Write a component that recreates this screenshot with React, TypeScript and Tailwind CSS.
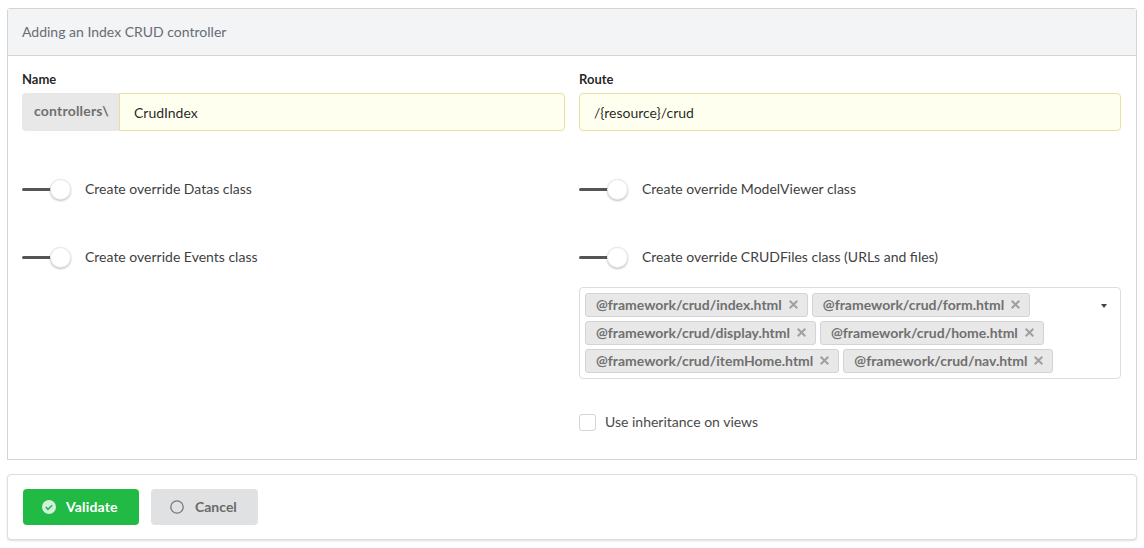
import React from "react";

const Toggle = ({ label }: { label: string }) => (
  <div className="flex items-center h-[22px]">
    <div className="relative w-[50px] h-[22px] shrink-0">
      <div className="absolute left-0 top-[10px] w-[30px] h-[3px] rounded-[2px] bg-[#555555]" />
      <div className="absolute left-[28px] top-[1px] w-[21px] h-[21px] rounded-full bg-white shadow-[0_1px_2px_0_rgba(34,36,38,0.3),0_0_0_1px_rgba(34,36,38,0.1)_inset]" />
    </div>
    <span className="ml-[13px] text-[14px] leading-[20px] text-[#3f3f3f]">{label}</span>
  </div>
);

const Chip = ({ label }: { label: string }) => (
  <span className="inline-flex items-center h-[24px] pb-[1px] pl-[10px] pr-[8px] rounded-[3px] bg-[#e8e8e8] border border-[#d4d4d5] text-[14px] font-bold text-[#707070]">
    {label}
    <svg className="ml-[6px]" width="11" height="11" viewBox="0 0 11 11">
      <path d="M1.7 1.7L9.3 9.3M9.3 1.7L1.7 9.3" stroke="#a0a0a0" strokeWidth="2" />
    </svg>
  </span>
);

export default function App() {
  return (
    <div className="w-[1144px] h-[548px] bg-white pt-[8px] px-[7px] font-['Lato','Liberation_Sans',sans-serif] overflow-hidden">
      <div className="h-[452px] border border-[#d4d4d5] rounded-t-[3px]">
        <div className="h-[47px] flex items-center pb-[1px] px-[14px] bg-[#f3f4f5] border-b border-[#d4d4d5] text-[14px] text-[#666d75]">
          Adding an Index CRUD controller
        </div>
        <div className="grid grid-cols-[543px_542px] gap-x-[14px] pl-[14px] pt-[14px]">
          <div>
            <div className="text-[13px] font-bold leading-[18px] text-[rgba(0,0,0,0.87)]">Name</div>
            <div className="flex h-[38px] mt-[5px]">
              <div className="w-[97px] pl-[12px] pt-[8px] bg-[#e8e8e8] rounded-l-[4px] text-[14px] tracking-[0.2px] leading-[20px] font-bold text-[#6f6f6f]">
                controllers\
              </div>
              <div className="flex-1 flex items-center pl-[14px] bg-[#fffff0] border border-[#e8e0a0] rounded-r-[4px] text-[14px] text-[rgba(0,0,0,0.87)]">
                CrudIndex
              </div>
            </div>
            <div className="mt-[47px]">
              <Toggle label="Create override Datas class" />
            </div>
            <div className="mt-[46px]">
              <Toggle label="Create override Events class" />
            </div>
          </div>
          <div>
            <div className="text-[13px] font-bold leading-[18px] text-[rgba(0,0,0,0.87)]">Route</div>
            <div className="flex items-center h-[38px] mt-[5px] pl-[14px] bg-[#fffff0] border border-[#e8e0a0] rounded-[4px] text-[14px] text-[rgba(0,0,0,0.87)]">
              /{"{resource}"}/crud
            </div>
            <div className="mt-[47px]">
              <Toggle label="Create override ModelViewer class" />
            </div>
            <div className="mt-[46px]">
              <Toggle label="Create override CRUDFiles class (URLs and files)" />
            </div>
            <div className="relative mt-[19px] h-[92px] border border-[#dddddf] rounded-[4px] pl-[5px] pt-[5px]">
              <div className="flex flex-col gap-y-[4px]">
                <div className="flex gap-x-[4px]">
                  <Chip label="@framework/crud/index.html" />
                  <Chip label="@framework/crud/form.html" />
                </div>
                <div className="flex gap-x-[4px]">
                  <Chip label="@framework/crud/display.html" />
                  <Chip label="@framework/crud/home.html" />
                </div>
                <div className="flex gap-x-[4px]">
                  <Chip label="@framework/crud/itemHome.html" />
                  <Chip label="@framework/crud/nav.html" />
                </div>
              </div>
              <div className="absolute right-[13px] top-[16px] w-0 h-0 border-x-[3.5px] border-x-transparent border-t-[4px] border-t-[#444444]" />
            </div>
            <div className="flex items-center mt-[33px]">
              <div className="w-[17px] h-[17px] rounded-[3px] border border-[#d4d4d5] bg-white" />
              <span className="ml-[9px] text-[14px] leading-[20px] text-[#4a4a4a]">Use inheritance on views</span>
            </div>
          </div>
        </div>
      </div>
      <div className="mt-[14px] h-[66px] flex items-center gap-[12px] pl-[15px] border border-[#dedee0] rounded-[4px] bg-white shadow-[0_1px_2px_0_rgba(34,36,38,0.15)]">
        <button className="flex items-center w-[116px] h-[36px] pl-[19px] pb-[1px] rounded-[4px] bg-[#21ba45] text-white text-[14px] tracking-[0.15px] font-bold">
          <svg width="14" height="14" viewBox="0 0 14 14">
            <circle cx="7" cy="7" r="7" fill="#d3f1da" />
            <path d="M3.8 7.2L6 9.3L10.2 5.2" fill="none" stroke="#21ba45" strokeWidth="1.6" />
          </svg>
          <span className="ml-[10px]">Validate</span>
        </button>
        <button className="flex items-center w-[107px] h-[36px] pl-[19px] pb-[1px] rounded-[4px] bg-[#e0e1e2] text-[#6a6a6a] text-[14px] font-bold">
          <svg width="14" height="14" viewBox="0 0 14 14">
            <circle cx="7" cy="7" r="6.2" fill="none" stroke="#777777" strokeWidth="1.3" />
          </svg>
          <span className="ml-[11px]">Cancel</span>
        </button>
      </div>
    </div>
  );
}
